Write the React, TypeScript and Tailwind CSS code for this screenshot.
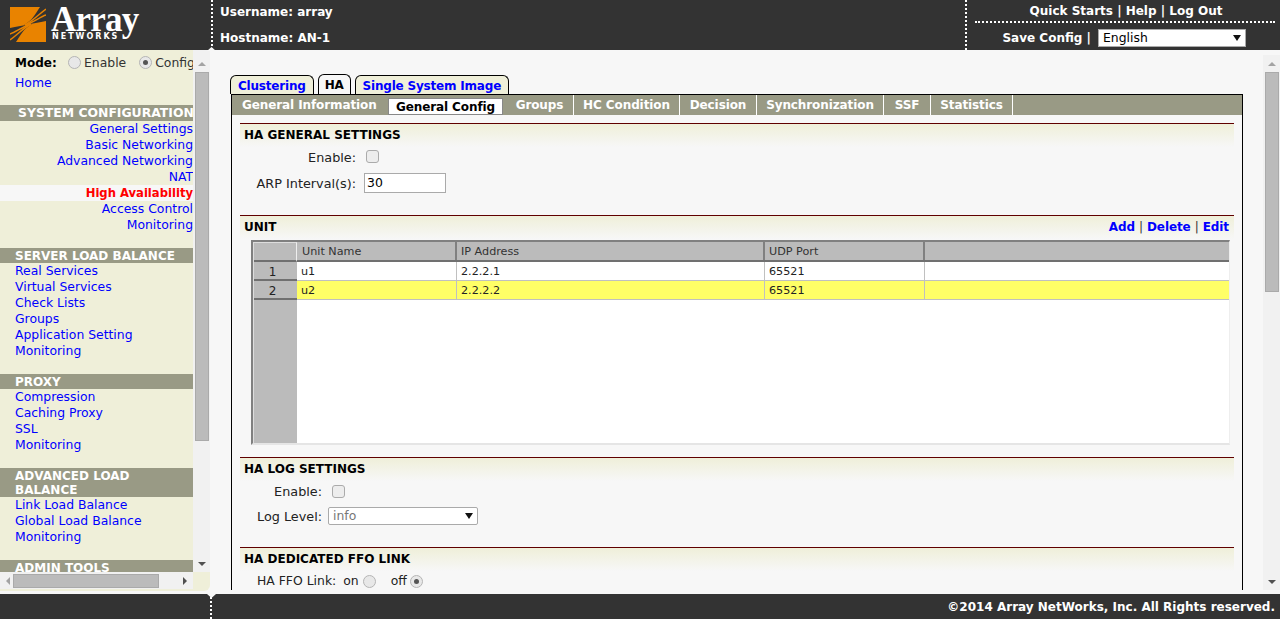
const font = { fontFamily: '"DejaVu Sans", Verdana, sans-serif' };

const groups = [
  { title: "SERVER LOAD BALANCE", items: ["Real Services", "Virtual Services", "Check Lists", "Groups", "Application Setting", "Monitoring"] },
  { title: "PROXY", items: ["Compression", "Caching Proxy", "SSL", "Monitoring"] },
  { title: "ADVANCED LOAD\nBALANCE", items: ["Link Load Balance", "Global Load Balance", "Monitoring"] },
];

const sysItems = ["General Settings", "Basic Networking", "Advanced Networking", "NAT", "High Availability", "Access Control", "Monitoring"];

const subTabs = [
  { label: "General Information", w: "w-[156px]" },
  { label: "Groups", w: "w-[68px]" },
  { label: "HC Condition", w: "w-[106px]" },
  { label: "Decision", w: "w-[77px]" },
  { label: "Synchronization", w: "w-[127px]" },
  { label: "SSF", w: "w-[47px]" },
  { label: "Statistics", w: "w-[82px]" },
];

const Arrow = ({ dir }: { dir: "up" | "down" | "left" | "right" }) => (
  <svg width="8" height="8" viewBox="0 0 8 8" className="shrink-0">
    {dir === "up" && <path d="M0 6 L4 2 L8 6 Z" fill="#a3a3a3" />}
    {dir === "down" && <path d="M0 2 L8 2 L4 6 Z" fill="#505050" />}
    {dir === "left" && <path d="M6 0 L6 8 L2 4 Z" fill="#a3a3a3" />}
    {dir === "right" && <path d="M2 0 L6 4 L2 8 Z" fill="#505050" />}
  </svg>
);

const Radio = ({ on }: { on?: boolean }) => (
  <span className="inline-flex w-[13px] h-[13px] shrink-0 items-center justify-center rounded-full border border-[#b5b5b5] bg-[#e8e8e8]">
    {on && <span className="w-[5px] h-[5px] rounded-full bg-[#555]" />}
  </span>
);

const Check = () => <span className="block w-[13px] h-[13px] rounded-[3px] border border-[#ababab] bg-[#ededed]" />;

const Caret = () => (
  <svg width="8" height="6" viewBox="0 0 8 6"><path d="M0 0 L8 0 L4 6 Z" fill="#111" /></svg>
);

const Logo = () => (
  <div className="relative w-[140px] h-[50px] shrink-0">
    <svg width="36" height="35" viewBox="0 0 36 35" className="absolute left-[10px] top-[7px]">
      <rect width="36" height="35" fill="#e98300" />
      <path d="M14 18 C22 14 26 6 30 0 L36 0 L36 14 C30 15 22 17 14 18 Z" fill="#333333" />
      <path d="M22 17 C14 21 10 29 6 35 L0 35 L0 21 C6 20 14 18 22 17 Z" fill="#333333" />
      <g fill="none" stroke="#e98300" strokeWidth="1.5">
        <path d="M15 18 C24 13 29 7 36 2" />
        <path d="M15 18 C24 15 30 10 36 8" />
        <path d="M21 17 C12 22 7 28 0 33" />
        <path d="M21 17 C12 20 6 25 0 27" />
      </g>
    </svg>
    <span className="absolute left-[51px] top-[-1px] text-[35px] leading-[42px] font-bold text-white tracking-[-0.8px]" style={{ fontFamily: '"Liberation Serif", serif' }}>Array</span>
    <span className="absolute left-[52px] top-[32px] text-[8px] leading-[10px] font-bold text-white tracking-[2px]" style={font}>NETWORKS</span>
  </div>
);

const Notch = ({ className }: { className: string }) => (
  <span className={`absolute left-[207px] w-[9px] h-[4px] bg-[#f7f7f7] ${className}`} />
);

const Section = ({ title, right }: { title: string; right?: boolean }) => (
  <div className="h-[24px] border-t border-[#600000] bg-gradient-to-b from-[#efefd9] to-[#f7f7f7] pl-[4px] pr-[5px] pb-[2px] flex items-center justify-between">
    <span className="font-bold text-[12px] text-black">{title}</span>
    {right && (
      <span className="font-bold text-[12px] tracking-[-0.1px] text-[#0000ff]">
        Add <span className="font-normal text-[#333]">|</span> Delete <span className="font-normal text-[#333]">|</span> Edit
      </span>
    )}
  </div>
);

const rows = [
  { n: "1", cells: ["u1", "2.2.2.1", "65521"], bg: "bg-white" },
  { n: "2", cells: ["u2", "2.2.2.2", "65521"], bg: "bg-[#ffff66]" },
];

export default function App() {
  return (
    <div className="relative h-[619px] w-[1280px] overflow-hidden flex flex-col bg-[#f7f7f7] text-[12.4px] text-[#222]" style={font}>
      {/* Header */}
      <header className="h-[50px] shrink-0 bg-[#333333] flex text-white font-bold text-[12px]">
        <div className="w-[211px] shrink-0"><Logo /></div>
        <div className="border-l-2 border-dotted border-white flex-1 flex flex-col pl-[7px] pt-[4px] leading-[17px] gap-[9px]">
          <span>Username: array</span>
          <span>Hostname: AN-1</span>
        </div>
        <div className="w-[315px] shrink-0 border-l-2 border-dotted border-white pl-[8px] pr-[5px] flex flex-col">
          <div className="h-[23px] border-b-2 border-dotted border-white text-center pl-[2px] leading-[22px]">
            Quick Starts | Help | Log Out
          </div>
          <div className="flex items-center justify-end gap-[7px] pt-[6px] pr-[29px]">
            <span>Save Config |</span>
            <div className="w-[148px] h-[18px] bg-white border border-[#aaa] flex items-center justify-between px-[4px] text-black font-normal text-[12.4px]">
              English
              <Caret />
            </div>
          </div>
        </div>
      </header>

      <div className="flex-1 flex min-h-0">
        {/* Sidebar */}
        <aside className="w-[210px] shrink-0 flex flex-col bg-[#efefd9] rounded-br-[6px] rounded-tr-[6px] h-[541px]">
          <div className="flex h-[522px] min-h-0">
            <div className="w-[193px] shrink-0 overflow-hidden leading-[16px]">
              <div className="flex items-center pl-[15px] h-[24px] pt-[1px] whitespace-nowrap">
                <b className="text-black w-[53px] shrink-0 text-[12px]">Mode:</b>
                <Radio /><span className="ml-[3px] mr-[13px] text-[#333] shrink-0">Enable</span>
                <Radio on /><span className="ml-[3px] text-[#333] shrink-0">Config</span>
              </div>
              <div className="pl-[15px] text-[#0000ff] mt-[1px]">Home</div>
              <div className="h-[14px]" />
              <div className="bg-[#999a85] text-white font-bold text-[12.4px] h-[16px] pl-[18px] whitespace-nowrap">SYSTEM CONFIGURATION</div>
              <div className="text-right">
                {sysItems.map((s) =>
                  s === "High Availability" ? (
                    <div key={s} className="bg-[#f7f7f7] text-[#ff0000] font-bold text-[11.6px]">{s}</div>
                  ) : (
                    <div key={s} className="text-[#0000ff]">{s}</div>
                  ),
                )}
              </div>
              {groups.map((g) => (
                <div key={g.title} className="mt-[15px]">
                  <div className="bg-[#999a85] text-white font-bold text-[12px] pl-[15px] leading-[14px] pt-[1px] whitespace-pre-line">{g.title}</div>
                  {g.items.map((s, i) => (
                    <div key={i} className="pl-[15px] text-[#0000ff]">{s}</div>
                  ))}
                </div>
              ))}
              <div className="mt-[15px] bg-[#999a85] text-white font-bold text-[12px] pl-[15px] h-[16px]">ADMIN TOOLS</div>
            </div>
            <div className="w-[17px] shrink-0 bg-[#f1f1f1] flex flex-col items-center">
              <div className="h-[17px] flex items-center justify-center mt-[5px]"><Arrow dir="up" /></div>
              <div className="w-[14px] h-[369px] bg-[#bbbbbb] border border-[#aaa]" />
              <div className="flex-1" />
              <div className="h-[17px] flex items-center justify-center"><Arrow dir="down" /></div>
            </div>
          </div>
          <div className="h-[17px] w-[193px] bg-[#f1f1f1] flex items-center px-[4px]">
            <Arrow dir="left" />
            <div className="w-[146px] h-[14px] ml-[1px] bg-[#bbbbbb] border border-[#aaa]" />
            <div className="flex-1" />
            <Arrow dir="right" />
          </div>
        </aside>

        {/* Main */}
        <main className="flex-1 min-w-0 flex h-[540px]">
          <div className="flex-1 min-w-0 overflow-hidden pl-[21px] pt-[25px]">
            <div className="flex gap-[4px] h-[19px] items-end font-bold text-[12px] ml-[-1px] tracking-[-0.2px]">
              <div className="h-[19px] px-[7px] border border-b-0 border-black rounded-t-[6px] bg-[#efefd9] text-[#0000ff] leading-[20px]">Clustering</div>
              <div className="h-[20px] px-[6px] border border-b-0 border-black rounded-t-[6px] bg-[#f7f7f7] text-black leading-[21px]">HA</div>
              <div className="h-[19px] px-[7px] border border-b-0 border-black rounded-t-[6px] bg-[#efefd9] text-[#0000ff] leading-[20px]">Single System Image</div>
            </div>
            <div className="w-[1012px] h-[500px] border border-b-0 border-black">
              <div className="h-[20px] bg-[#999a85] flex items-end font-bold text-[12px] tracking-[-0.1px] text-white">
                <div className={`${subTabs[0].w} h-[20px] pl-[10px] leading-[21px] whitespace-nowrap`}>{subTabs[0].label}</div>
                <div className="w-[115px] h-[17px] bg-white border border-[#888] text-center text-black leading-[16px] whitespace-nowrap">General Config</div>
                <div className="w-[3px]" />
                {subTabs.slice(1).map((t) => (
                  <div key={t.label} className={`${t.w} h-[20px] text-center leading-[21px] border-r border-white whitespace-nowrap`}>{t.label}</div>
                ))}
              </div>
              <div className="px-[8px] pt-[8px]">
                <Section title="HA GENERAL SETTINGS" />
                <div className="flex items-center h-[21px] mt-[-1px]">
                  <span className="w-[116px] text-right mr-[10px] text-[12.8px] pt-[2px]">Enable:</span><Check />
                </div>
                <div className="flex items-center mt-[6px] h-[20px]">
                  <span className="w-[116px] text-right mr-[8px] text-[12.8px] pt-[2px]">ARP Interval(s):</span>
                  <div className="w-[82px] h-[20px] bg-white border border-[#aaa] pl-[2px] leading-[18px] text-black">30</div>
                </div>
                <div className="mt-[22px]">
                  <Section title="UNIT" right />
                </div>
                {/* grid */}
                <div className="ml-[11px] w-[979px] h-[205px] border-t-[2px] border-l-[2px] border-[#808080] bg-white mt-[1px] border-r border-r-[#eee] border-b-2 border-b-[#e5e5e5] flex">
                  <div className="w-[44px] bg-[#bbbbbb] border-l border-l-[#ddd] shrink-0">
                    <div className="h-[20px] bg-[#bbbbbb] border-t border-[#ddd] border-r border-r-[#eee] border-b-2 border-b-[#707070]" />
                    {rows.map((r) => (
                      <div key={r.n} className="h-[19px] text-center leading-[21px] text-[12px] pr-[6px] bg-[#bbb] border-b-2 border-b-[#707070]">{r.n}</div>
                    ))}
                  </div>
                  <div className="flex-1 min-w-0">
                    <div className="h-[20px] bg-[#bbbbbb] flex border-b-2 border-b-[#707070] leading-[20px] text-[11.2px] text-[#333]">
                      <div className="w-[160px] pl-[5px] border-r-2 border-r-[#808080]">Unit Name</div>
                      <div className="w-[308px] pl-[4px] border-r-2 border-r-[#808080]">IP Address</div>
                      <div className="w-[160px] pl-[4px] border-r-2 border-r-[#808080]">UDP Port</div>
                      <div className="flex-1" />
                    </div>
                    {rows.map((r) => (
                      <div key={r.n} className={`h-[19px] flex ${r.bg} border-b border-[#c0c0c0] leading-[20px] text-[11.2px]`}>
                        <div className="w-[160px] pl-[4px] border-r border-[#c0c0c0]">{r.cells[0]}</div>
                        <div className="w-[308px] pl-[4px] border-r border-[#c0c0c0]">{r.cells[1]}</div>
                        <div className="w-[160px] pl-[4px] border-r border-[#c0c0c0]">{r.cells[2]}</div>
                      </div>
                    ))}
                  </div>
                </div>
                <div className="mt-[12px]">
                  <Section title="HA LOG SETTINGS" />
                </div>
                <div className="flex items-center h-[21px]">
                  <span className="w-[82px] text-right mr-[10px] text-[12.8px]">Enable:</span><Check />
                </div>
                <div className="flex items-center mt-[5px] h-[18px]">
                  <span className="w-[82px] text-right mr-[6px] text-[12.8px] pt-[2px]">Log Level:</span>
                  <div className="w-[150px] h-[18px] bg-white border border-[#aaa] rounded-[2px] flex items-center justify-between px-[4px] text-[#777]">
                    info
                    <Caret />
                  </div>
                </div>
                <div className="mt-[22px]">
                  <Section title="HA DEDICATED FFO LINK" />
                </div>
                <div className="flex items-center h-[21px] pl-[17px]">
                  <span className="mr-[7px]">HA FFO Link:</span>
                  <span className="mr-[4px]">on</span><Radio />
                  <span className="ml-[15px] mr-[3px]">off</span><Radio on />
                </div>
              </div>
            </div>
          </div>
          <div className="w-[17px] shrink-0 bg-[#f1f1f1] mt-[5px] flex flex-col items-center">
            <div className="h-[17px] flex items-center justify-center"><Arrow dir="up" /></div>
            <div className="w-[14px] h-[220px] bg-[#bbbbbb] border border-[#aaa]" />
            <div className="flex-1" />
            <div className="h-[17px] flex items-center justify-center"><Arrow dir="down" /></div>
          </div>
        </main>
      </div>

      {/* Footer */}
      <footer className="h-[25px] shrink-0 bg-[#333333] flex items-center justify-between pr-[5px] text-white font-bold text-[12px]">
        <div className="ml-[210px] h-full border-l-2 border-dotted border-white" />
        <span>©2014 Array NetWorks, Inc. All Rights reserved.</span>
      </footer>

      <Notch className="top-[47px] [clip-path:polygon(50%_0,100%_100%,0_100%)]" />
      <Notch className="top-[594px] [clip-path:polygon(0_0,100%_0,50%_100%)]" />
    </div>
  );
}
